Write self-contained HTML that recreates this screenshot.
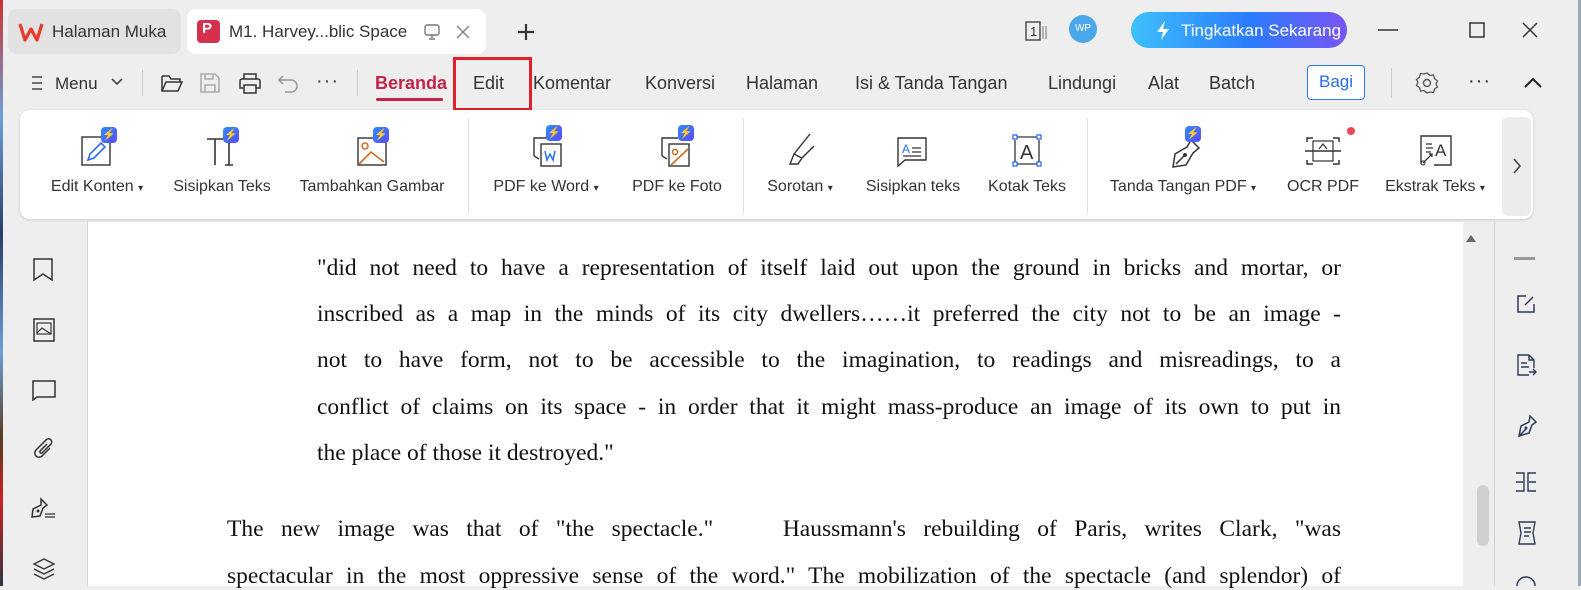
<!DOCTYPE html>
<html><head><meta charset="utf-8"><style>
*{margin:0;padding:0;box-sizing:border-box}
body{width:1581px;height:586px;overflow:hidden;background:#eeeeee;font-family:"Liberation Sans",sans-serif;color:#222;position:relative}
.a{position:absolute}
.t{position:absolute;white-space:nowrap}
.lbl{position:absolute;top:178px;font-size:16px;color:#333;transform:translateX(-50%);white-space:nowrap}
.ic{position:absolute;top:128px;transform:translateX(-50%)}
.sep{position:absolute;top:118px;width:1px;height:96px;background:#e2e2e2}
.menu{position:absolute;top:73px;font-size:18px;color:#333}
.doc{position:absolute;font-family:"Liberation Serif",serif;font-size:23.5px;color:#111;text-align:justify;text-align-last:justify;white-space:nowrap}
.badge{position:absolute;width:16px;height:16px;border-radius:4px;background:linear-gradient(135deg,#2f8cff,#5a4bff);color:#fff;font-size:11px;line-height:16px;text-align:center}
svg{overflow:visible}
</style></head><body>
<div class="a" style="left:0;top:0;width:3px;height:586px;background:linear-gradient(#c33,#6a9fd8 20%,#2b3b6a 40%,#6a9fd8 60%,#5a3a20 75%,#c22 85%,#334 100%)"></div>
<div class="a" style="left:1578px;top:0;width:3px;height:586px;background:#9aa7b8"></div>

<!-- Tabs -->
<div class="a" style="left:8px;top:9px;width:173px;height:45px;border-radius:9px;background:#e2e2e2"></div>
<svg class="a" style="left:19px;top:23px" width="24" height="18"><path d="M1 1l5 16 6-11 6 11 5-16" fill="none" stroke="#e8392a" stroke-width="3.2" stroke-linejoin="round"/></svg>
<div class="t" style="left:52px;top:22px;font-size:17px;color:#333">Halaman Muka</div>
<div class="a" style="left:187px;top:9px;width:299px;height:45px;border-radius:9px;background:#fff"></div>
<div class="a" style="left:197px;top:20px;width:23px;height:23px;border-radius:4px;background:#d6304f"></div>
<div class="t" style="left:202px;top:20px;color:#fff;font-size:15px;font-weight:bold">P</div>
<div class="t" style="left:229px;top:22px;font-size:17px;color:#333">M1. Harvey...blic Space</div>
<svg class="a" style="left:424px;top:24px" width="16" height="16"><rect x="1" y="1" width="14" height="10" rx="2" fill="none" stroke="#777" stroke-width="1.4"/><path d="M8 11v3M5 15h6" stroke="#777" stroke-width="1.4"/></svg>
<svg class="a" style="left:456px;top:25px" width="14" height="14"><path d="M1 1l12 12M13 1L1 13" stroke="#888" stroke-width="1.5"/></svg>
<svg class="a" style="left:516px;top:22px" width="20" height="20"><path d="M10 2v16M2 10h16" stroke="#333" stroke-width="2.2"/></svg>

<svg class="a" style="left:1020px;top:20px" width="36" height="22"><rect x="6" y="2" width="14" height="18" fill="none" stroke="#444" stroke-width="1.4"/><text x="10" y="16" font-size="13" fill="#333" font-family="Liberation Sans">1</text><path d="M23 6v13M26 6v13" stroke="#777"/></svg>
<div class="a" style="left:1069px;top:15px;width:28px;height:28px;border-radius:50%;background:#4aa8ea;color:#fff;font-size:10px;line-height:28px;text-align:center">WP</div>
<div class="a" style="left:1131px;top:12px;width:216px;height:36px;border-radius:18px;background:linear-gradient(90deg,#3ec0fb,#2a7cff 55%,#7a55f5)"></div>
<svg class="a" style="left:1154px;top:20px" width="18" height="20"><path d="M11 1L3 12h6l-2 8 8-11h-6z" fill="#fff"/></svg>
<div class="t" style="left:1181px;top:21px;font-size:17px;color:#fff">Tingkatkan Sekarang</div>
<svg class="a" style="left:1378px;top:29px" width="20" height="2"><path d="M0 1h20" stroke="#333" stroke-width="1.5"/></svg>
<svg class="a" style="left:1469px;top:22px" width="16" height="16"><rect x="1" y="1" width="14" height="14" fill="none" stroke="#333" stroke-width="1.5"/></svg>
<svg class="a" style="left:1522px;top:22px" width="16" height="16"><path d="M1 1l14 14M15 1L1 15" stroke="#333" stroke-width="1.5"/></svg>

<!-- Menu row -->
<svg class="a" style="left:30px;top:75px" width="14" height="16"><path d="M2 2h10M2 8h10M2 14h10" stroke="#444" stroke-width="1.5"/></svg>
<div class="menu" style="left:55px;font-size:17px;top:74px">Menu</div>
<svg class="a" style="left:111px;top:78px" width="12" height="8"><path d="M1 1l5 5 5-5" fill="none" stroke="#444" stroke-width="1.6"/></svg>
<div class="a" style="left:142px;top:70px;width:1px;height:26px;background:#ccc"></div>
<svg class="a" style="left:160px;top:72px" width="24" height="22"><path d="M2 4h7l2 3h9v3M2 4v15h16l4-9H6L2 19" fill="none" stroke="#333" stroke-width="1.5"/></svg>
<svg class="a" style="left:199px;top:72px" width="22" height="22"><path d="M2 2h14l4 4v14H2zM6 2v5h8V2M6 20v-7h10v7" fill="none" stroke="#aaa" stroke-width="1.5"/></svg>
<svg class="a" style="left:238px;top:72px" width="24" height="22"><path d="M6 7V2h12v5M4 7h16a2 2 0 012 2v7h-4M6 16H2V9a2 2 0 012-2M6 13h12v8H6z" fill="none" stroke="#333" stroke-width="1.5"/></svg>
<svg class="a" style="left:277px;top:73px" width="24" height="22"><path d="M6 3L2 7l4 4M2 7h12a6 6 0 010 12h-6" fill="none" stroke="#999" stroke-width="1.5"/></svg>
<div class="t" style="left:316px;top:70px;font-size:20px;color:#444;letter-spacing:1px">···</div>
<div class="a" style="left:357px;top:70px;width:1px;height:26px;background:#ccc"></div>
<div class="menu" style="left:375px;font-weight:bold;color:#c4244a">Beranda</div>
<div class="a" style="left:376px;top:98px;width:67px;height:3px;border-radius:2px;background:#c4244a"></div>
<div class="menu" style="left:473px">Edit</div>
<div class="a" style="left:453px;top:57px;width:79px;height:54px;border:3px solid #e0202a"></div>
<div class="menu" style="left:533px">Komentar</div>
<div class="menu" style="left:645px">Konversi</div>
<div class="menu" style="left:746px">Halaman</div>
<div class="menu" style="left:855px">Isi &amp; Tanda Tangan</div>
<div class="menu" style="left:1048px">Lindungi</div>
<div class="menu" style="left:1148px">Alat</div>
<div class="menu" style="left:1209px">Batch</div>
<div class="a" style="left:1307px;top:65px;width:58px;height:35px;border:1.5px solid #2a7cff;border-radius:4px;background:#fff;color:#2a6ef0;font-size:17px;text-align:center;line-height:32px">Bagi</div>
<div class="a" style="left:1391px;top:68px;width:1px;height:30px;background:#ccc"></div>
<svg class="a" style="left:1415px;top:71px" width="24" height="24"><circle cx="12" cy="12" r="3.5" fill="none" stroke="#555" stroke-width="1.4"/><path d="M12 2l3 2.5 3.5-.5 1 3.5 3 2.5-1.5 3 1.5 3-3 2-1 3.5-3.5-.5L12 22l-3-2.5-3.5.5-1-3.5-3-2 1.5-3-1.5-3 3-2.5 1-3.5 3.5.5z" fill="none" stroke="#555" stroke-width="1.3"/></svg>
<div class="t" style="left:1468px;top:70px;font-size:20px;color:#333;letter-spacing:1px">···</div>
<svg class="a" style="left:1524px;top:77px" width="18" height="11"><path d="M1 10l8-8 8 8" fill="none" stroke="#222" stroke-width="2"/></svg>

<!-- Toolbar card -->
<div class="a" style="left:20px;top:110px;width:1513px;height:109px;border-radius:10px;background:#fff;box-shadow:0 1px 3px rgba(0,0,0,.15)"></div>
<div class="a" style="left:1502px;top:117px;width:29px;height:99px;border-radius:6px;background:#ececec"></div>
<svg class="a" style="left:1513px;top:158px" width="8" height="16"><path d="M1 1l6 7-6 7" fill="none" stroke="#444" stroke-width="1.6"/></svg>
<div class="sep" style="left:468px"></div><div class="sep" style="left:743px"></div><div class="sep" style="left:1087px"></div>

<!-- icons -->
<svg class="ic" style="left:97px" width="36" height="40"><rect x="3" y="9" width="28" height="28" fill="none" stroke="#333" stroke-width="1.4"/><path d="M9 32l2-6 11-11 4 4-11 11z" fill="none" stroke="#2a6ef0" stroke-width="1.6"/></svg>
<div class="badge" style="left:101px;top:127px">⚡</div>
<svg class="ic" style="left:222px" width="36" height="40"><path d="M3 11h16M11 11v26M25 11v26M21 37h8" fill="none" stroke="#333" stroke-width="1.6"/></svg>
<div class="badge" style="left:223px;top:127px">⚡</div>
<svg class="ic" style="left:372px" width="36" height="40"><rect x="4" y="10" width="28" height="27" fill="none" stroke="#333" stroke-width="1.4"/><circle cx="11" cy="18" r="3" fill="none" stroke="#d2691e" stroke-width="1.5"/><path d="M5 36l12-12 13 10" fill="none" stroke="#d2691e" stroke-width="1.6"/></svg>
<div class="badge" style="left:373px;top:127px">⚡</div>
<svg class="ic" style="left:549px" width="36" height="42"><path d="M3 28V10h16M3 28l5 3" fill="none" stroke="#333" stroke-width="1.4"/><rect x="10" y="16" width="20" height="22" fill="none" stroke="#333" stroke-width="1.4"/><path d="M14 23l2 9 3-6 3 6 2-9" fill="none" stroke="#2a6ef0" stroke-width="1.5"/></svg>
<div class="badge" style="left:546px;top:125px">⚡</div>
<svg class="ic" style="left:677px" width="36" height="42"><path d="M3 28V10h16M3 28l5 3" fill="none" stroke="#333" stroke-width="1.4"/><rect x="10" y="16" width="20" height="22" fill="none" stroke="#333" stroke-width="1.4"/><circle cx="16" cy="24" r="2.5" fill="none" stroke="#d2691e" stroke-width="1.4"/><path d="M12 37l17-16" stroke="#d2691e" stroke-width="1.6"/></svg>
<div class="badge" style="left:678px;top:125px">⚡</div>
<svg class="ic" style="left:800px" width="36" height="40"><path d="M28 6L12 26l-4 10h8l4-6 12-12M12 26l8 4" fill="none" stroke="#333" stroke-width="1.4"/></svg>
<svg class="ic" style="left:913px" width="36" height="40"><path d="M3 10h28v22H10l-7 6z" fill="none" stroke="#333" stroke-width="1.4"/><text x="7" y="25" font-size="12" fill="#2a6ef0" font-family="Liberation Sans">A</text><path d="M17 20h9M17 24h9M8 28h18" stroke="#333" stroke-width="1.3"/></svg>
<svg class="ic" style="left:1027px" width="36" height="40"><path d="M6 9h24M6 36h24M6 12v22M30 12v22" fill="none" stroke="#333" stroke-width="1.3"/><g fill="#fff" stroke="#2a6ef0" stroke-width="1.3"><rect x="4" y="7" width="4" height="4"/><rect x="28" y="7" width="4" height="4"/><rect x="4" y="34" width="4" height="4"/><rect x="28" y="34" width="4" height="4"/></g><text x="11" y="31" font-size="20" fill="#333" font-family="Liberation Sans">A</text></svg>
<svg class="ic" style="left:1187px" width="36" height="42"><path d="M22 12l8 8-6 5-7 12-13 2 2-13 12-7zM7 36l8-8" fill="none" stroke="#333" stroke-width="1.5"/><circle cx="16" cy="27" r="2" fill="#333"/></svg>
<div class="badge" style="left:1185px;top:126px">⚡</div>
<svg class="ic" style="left:1323px" width="40" height="40"><path d="M4 14v-4h6M30 10h6v4M4 32v4h6M30 36h6v-4M2 23h36" fill="none" stroke="#333" stroke-width="1.5"/><rect x="10" y="13" width="20" height="20" fill="none" stroke="#333" stroke-width="1.2"/><path d="M16 21l4-5 4 5" fill="none" stroke="#333" stroke-width="1.2"/></svg>
<div class="a" style="left:1347px;top:127px;width:8px;height:8px;border-radius:50%;background:#ee4a55"></div>
<svg class="ic" style="left:1436px" width="36" height="40"><path d="M3 36V8h30v29H16" fill="none" stroke="#333" stroke-width="1.4"/><path d="M8 16h6M8 20h7M8 24h5M5 35l9-9M11 26h3v3" fill="none" stroke="#333" stroke-width="1.3"/><circle cx="5" cy="35" r="2" fill="none" stroke="#333"/><text x="17" y="28" font-size="17" fill="#333" font-family="Liberation Sans">A</text></svg>

<div class="lbl" style="left:97px">Edit Konten <span style="font-size:10px">▾</span></div>
<div class="lbl" style="left:222px">Sisipkan Teks</div>
<div class="lbl" style="left:372px">Tambahkan Gambar</div>
<div class="lbl" style="left:546px">PDF ke Word <span style="font-size:10px">▾</span></div>
<div class="lbl" style="left:677px">PDF ke Foto</div>
<div class="lbl" style="left:800px">Sorotan <span style="font-size:10px">▾</span></div>
<div class="lbl" style="left:913px">Sisipkan teks</div>
<div class="lbl" style="left:1027px">Kotak Teks</div>
<div class="lbl" style="left:1183px">Tanda Tangan PDF <span style="font-size:10px">▾</span></div>
<div class="lbl" style="left:1323px">OCR PDF</div>
<div class="lbl" style="left:1435px">Ekstrak Teks <span style="font-size:10px">▾</span></div>

<!-- Document -->
<div class="a" style="left:87px;top:222px;width:1376px;height:364px;background:#fff;border-left:1px solid #d6d6d6"></div>
<div class="a" style="left:1463px;top:222px;width:32px;height:364px;background:#eeeeee;border-right:1px solid #d0d0d0"></div>
<svg class="a" style="left:1466px;top:234px" width="10" height="8"><path d="M0 8L5 1l5 7z" fill="#666"/></svg>
<div class="a" style="left:1477px;top:485px;width:12px;height:61px;border-radius:6px;background:#d0d0d0"></div>

<div class="doc" style="left:317px;top:255px;width:1024px">"did not need to have a representation of itself laid out upon the ground in bricks and mortar, or</div>
<div class="doc" style="left:317px;top:301px;width:1024px">inscribed as a map in the minds of its city dwellers……it preferred the city not to be an image -</div>
<div class="doc" style="left:317px;top:347px;width:1024px">not to have form, not to be accessible to the imagination, to readings and misreadings, to a</div>
<div class="doc" style="left:317px;top:394px;width:1024px">conflict of claims on its space - in order that it might mass-produce an image of its own to put in</div>
<div class="doc" style="left:317px;top:440px;text-align-last:left">the place of those it destroyed."</div>
<div class="doc" style="left:227px;top:516px;width:1114px">The new image was that of "the spectacle."&nbsp;&nbsp;&nbsp; Haussmann's rebuilding of Paris, writes Clark, "was</div>
<div class="doc" style="left:227px;top:563px;width:1114px">spectacular in the most oppressive sense of the word." The mobilization of the spectacle (and splendor) of</div>

<!-- Left sidebar icons -->
<svg class="a" style="left:32px;top:258px" width="22" height="24"><path d="M2 1h18v21l-9-6-9 6z" fill="none" stroke="#333" stroke-width="1.5"/></svg>
<svg class="a" style="left:33px;top:318px" width="22" height="24"><rect x="1" y="1" width="20" height="22" fill="none" stroke="#333" stroke-width="1.5"/><rect x="4" y="5" width="14" height="11" fill="none" stroke="#333" stroke-width="1.2"/><path d="M4 15l5-5 9 6" fill="none" stroke="#333" stroke-width="1.2"/></svg>
<svg class="a" style="left:32px;top:379px" width="24" height="22"><path d="M1 2h22v16H5l-4 3z" fill="none" stroke="#333" stroke-width="1.5"/></svg>
<svg class="a" style="left:31px;top:437px" width="26" height="26"><path d="M19 11l-8 8a4 4 0 01-6-6l10-10a3 3 0 015 4l-9 9a1.5 1.5 0 01-2-2l7-7" fill="none" stroke="#333" stroke-width="1.5"/></svg>
<svg class="a" style="left:31px;top:497px" width="26" height="24"><path d="M10 2l6 6-4 3-3 8-8 1 1-8 8-4z" fill="none" stroke="#333" stroke-width="1.5"/><circle cx="7" cy="14" r="1.5" fill="#333"/><path d="M14 17h10M14 20h10" stroke="#333" stroke-width="1.3"/></svg>
<svg class="a" style="left:32px;top:557px" width="24" height="26"><path d="M12 2l10 5-10 5L2 7zM2 12l10 5 10-5M2 17l10 5 10-5" fill="none" stroke="#333" stroke-width="1.4"/></svg>

<!-- Right sidebar -->
<div class="a" style="left:1514px;top:257px;width:21px;height:3px;background:#999"></div>
<svg class="a" style="left:1517px;top:295px" width="18" height="18"><path d="M9 1H1v16h16V9M8 10l8-8" fill="none" stroke="#2c3a55" stroke-width="1.5"/></svg>
<svg class="a" style="left:1517px;top:354px" width="20" height="22"><path d="M12 1H1v20h11M12 1l5 5v8M12 1v5h5M4 9h6M4 13h8M12 18h7M16 15l3 3-3 3" fill="none" stroke="#2c3a55" stroke-width="1.4"/></svg>
<svg class="a" style="left:1516px;top:414px" width="22" height="24"><path d="M14 2l6 6-4 3-3 8-10 3 2-10 8-4z M3 22l7-7" fill="none" stroke="#2c3a55" stroke-width="1.5"/><circle cx="10" cy="14" r="1.5" fill="#2c3a55"/></svg>
<svg class="a" style="left:1515px;top:472px" width="22" height="20"><path d="M1 1h8v18H1M1 10h7M21 1h-8v18h8M14 10h7" fill="none" stroke="#2c3a55" stroke-width="1.4"/></svg>
<svg class="a" style="left:1515px;top:520px" width="24" height="26"><path d="M4 2h16l-2 11 2 11H4l2-11zM9 8h7M9 12h7M9 16h5" fill="none" stroke="#2c3a55" stroke-width="1.4"/></svg>
<svg class="a" style="left:1514px;top:578px" width="24" height="8"><path d="M3 8a9 9 0 0118 0" fill="none" stroke="#2c3a55" stroke-width="1.5"/></svg>
</body></html>
